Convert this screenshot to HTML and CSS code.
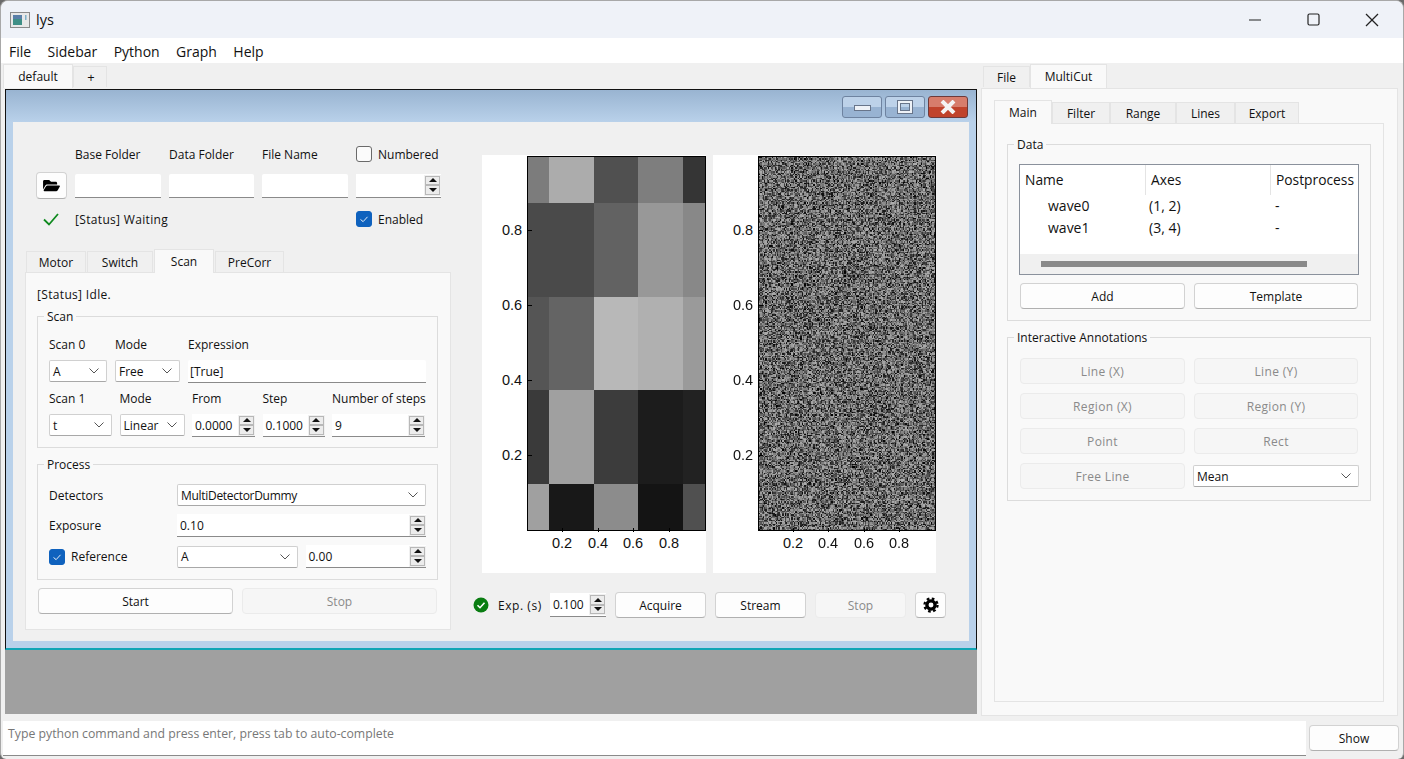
FILE: index.html
```html
<!DOCTYPE html>
<html lang="en">
<head>
  <meta charset="UTF-8" />
  <title>lys</title>
  <link rel="stylesheet" href="styles.css">
</head>
<body>
  <div class="app">
    <header class="titlebar">
      <svg class="app-icon" viewBox="0 0 20 16">
        <rect x="0.5" y="0.5" width="19" height="15" fill="#e8e8e8" stroke="#8a8a8a" />
        <rect x="3" y="3" width="9" height="10" fill="#3f8f86" />
        <rect x="3" y="3" width="9" height="4" fill="#5a7fa8" />
        <rect x="15" y="3" width="1.5" height="5" fill="#7fb0c8" />
      </svg>
      <span class="app-name">lys</span>
      <div class="win-controls">
        <svg viewBox="0 0 14 14"><line x1="1" y1="7" x2="13" y2="7" /></svg>
        <svg viewBox="0 0 14 14"><rect x="1" y="1" width="11" height="11" rx="1.5" /></svg>
        <svg viewBox="0 0 14 14"><line x1="1" y1="1" x2="13" y2="13" /><line x1="13" y1="1" x2="1" y2="13" /></svg>
      </div>
    </header>

    <nav class="menubar">
      <span>File</span><span>Sidebar</span><span>Python</span><span>Graph</span><span>Help</span>
    </nav>

    <div class="main">
      <section class="workspace">
        <div class="tabs doc-tabs">
          <div class="tab active">default</div>
          <div class="tab">+</div>
        </div>

        <div class="desktop">
          <div class="subwindow">
            <div class="sub-title">
              <div class="aero-btn"><i class="aero-min"></i></div>
              <div class="aero-btn"><i class="aero-max"></i></div>
              <div class="aero-btn aero-close">
                <svg viewBox="0 0 18 14"><path d="M3 1 L15 13 M15 1 L3 13" /></svg>
              </div>
            </div>

            <div class="sub-content">
              <div class="left-col">
                <div class="file-form">
                  <span></span>
                  <label>Base Folder</label>
                  <label>Data Folder</label>
                  <label>File Name</label>
                  <div class="check"><i class="box"></i>Numbered</div>

                  <button class="btn icon-btn">
                    <svg viewBox="0 0 576 512"><path d="M572.694 292.093L500.27 416.248A63.997 63.997 0 0 1 444.989 448H45.025c-18.523 0-30.064-20.093-20.731-36.093l72.424-124.155A64 64 0 0 1 152 256h399.964c18.523 0 30.064 20.093 20.73 36.093zM152 224h328v-48c0-26.51-21.49-48-48-48H272l-64-64H48C21.49 64 0 85.49 0 112v278.046l69.077-118.418C86.214 242.25 117.989 224 152 224z" /></svg>
                  </button>
                  <div class="field"></div>
                  <div class="field"></div>
                  <div class="field"></div>
                  <div class="spin"><span></span><div class="arrows"><i class="up"></i><i class="down"></i></div></div>

                  <svg class="ok-mark" viewBox="0 0 16 16"><path d="M1 8.5 L6 13.5 L15 3" /></svg>
                  <div class="status-wide">[Status] Waiting</div>
                  <div class="check"><i class="box on"><svg viewBox="0 0 16 16"><path d="M4 8.5 L7 11 L12 5.5" /></svg></i>Enabled</div>
                </div>

                <div class="tabs scan-tabs">
                  <div class="tab">Motor</div>
                  <div class="tab">Switch</div>
                  <div class="tab active">Scan</div>
                  <div class="tab">PreCorr</div>
                </div>
                <div class="pane scan-pane">
                  <div class="pane-status">[Status] Idle.</div>

                  <div class="group scan-group">
                    <div class="group-title">Scan</div>
                    <div class="scan-row first">
                      <div class="cell"><label>Scan 0</label><div class="combo">A<svg viewBox="0 0 10 6"><path d="M0.5 0.5 L5 5 L9.5 0.5" /></svg></div></div>
                      <div class="cell"><label>Mode</label><div class="combo">Free<svg viewBox="0 0 10 6"><path d="M0.5 0.5 L5 5 L9.5 0.5" /></svg></div></div>
                      <div class="cell"><label>Expression</label><div class="field">[True]</div></div>
                    </div>
                    <div class="scan-row second">
                      <div class="cell"><label>Scan 1</label><div class="combo">t<svg viewBox="0 0 10 6"><path d="M0.5 0.5 L5 5 L9.5 0.5" /></svg></div></div>
                      <div class="cell"><label>Mode</label><div class="combo">Linear<svg viewBox="0 0 10 6"><path d="M0.5 0.5 L5 5 L9.5 0.5" /></svg></div></div>
                      <div class="cell"><label>From</label><div class="spin"><span>0.0000</span><div class="arrows"><i class="up"></i><i class="down"></i></div></div></div>
                      <div class="cell"><label>Step</label><div class="spin"><span>0.1000</span><div class="arrows"><i class="up"></i><i class="down"></i></div></div></div>
                      <div class="cell"><label>Number of steps</label><div class="spin"><span>9</span><div class="arrows"><i class="up"></i><i class="down"></i></div></div></div>
                    </div>
                  </div>

                  <div class="group process-group">
                    <div class="group-title">Process</div>
                    <div class="process-grid">
                      <label>Detectors</label>
                      <div class="combo detector">MultiDetectorDummy<svg viewBox="0 0 10 6"><path d="M0.5 0.5 L5 5 L9.5 0.5" /></svg></div>
                      <label>Exposure</label>
                      <div class="spin"><span>0.10</span><div class="arrows"><i class="up"></i><i class="down"></i></div></div>
                      <div class="check"><i class="box on"><svg viewBox="0 0 16 16"><path d="M4 8.5 L7 11 L12 5.5" /></svg></i>Reference</div>
                      <div class="ref-pair">
                        <div class="combo">A<svg viewBox="0 0 10 6"><path d="M0.5 0.5 L5 5 L9.5 0.5" /></svg></div>
                        <div class="spin"><span>0.00</span><div class="arrows"><i class="up"></i><i class="down"></i></div></div>
                      </div>
                    </div>
                  </div>

                  <div class="start-stop">
                    <button class="btn">Start</button>
                    <button class="btn off">Stop</button>
                  </div>
                </div>
              </div>

              <div class="right-col">
                <div class="plots">
                  <div class="plot" id="plot-a"><div class="frame"><div class="heat" id="heat"></div></div></div>
                  <div class="plot plot-b" id="plot-b"><div class="frame"><canvas id="noise" width="136" height="287"></canvas></div></div>
                </div>
                <div class="acquire-row">
                  <svg class="ok-dot" viewBox="0 0 16 16"><circle cx="8" cy="8" r="7.5" /><path d="M4.5 8.2 L7 10.7 L11.5 5.8" /></svg>
                  <span class="exp-label">Exp. (s)</span>
                  <div class="spin exp-spin"><span>0.100</span><div class="arrows"><i class="up"></i><i class="down"></i></div></div>
                  <button class="btn">Acquire</button>
                  <button class="btn">Stream</button>
                  <button class="btn off">Stop</button>
                  <button class="btn gear-btn">
                    <svg viewBox="0 0 24 24"><circle class="teeth" cx="12" cy="12" r="9.8" /><circle class="ring" cx="12" cy="12" r="6.2" /></svg>
                  </button>
                </div>
              </div>
            </div>
          </div>
        </div>
      </section>

      <aside class="sidebar">
        <div class="tabs side-tabs">
          <div class="tab">File</div>
          <div class="tab active">MultiCut</div>
        </div>
        <div class="pane side-pane">
          <div class="tabs cut-tabs">
            <div class="tab active">Main</div>
            <div class="tab">Filter</div>
            <div class="tab">Range</div>
            <div class="tab">Lines</div>
            <div class="tab">Export</div>
          </div>
          <div class="pane cut-pane">
            <div class="group data-group">
              <div class="group-title">Data</div>
              <div class="tree">
                <div class="tree-head"><span>Name</span><span>Axes</span><span>Postprocess</span></div>
                <div class="tree-row"><span>wave0</span><span>(1, 2)</span><span>-</span></div>
                <div class="tree-row"><span>wave1</span><span>(3, 4)</span><span>-</span></div>
                <div class="tree-scroll"><i></i></div>
              </div>
              <div class="two-btns">
                <button class="btn">Add</button>
                <button class="btn">Template</button>
              </div>
            </div>
            <div class="group annot-group">
              <div class="group-title">Interactive Annotations</div>
              <div class="two-btns">
                <button class="btn off">Line (X)</button>
                <button class="btn off">Line (Y)</button>
                <button class="btn off">Region (X)</button>
                <button class="btn off">Region (Y)</button>
                <button class="btn off">Point</button>
                <button class="btn off">Rect</button>
                <button class="btn off">Free Line</button>
                <div class="combo">Mean<svg viewBox="0 0 10 6"><path d="M0.5 0.5 L5 5 L9.5 0.5" /></svg></div>
              </div>
            </div>
          </div>
        </div>
      </aside>
    </div>

    <footer class="cmdbar">
      <div class="cmd-input">Type python command and press enter, press tab to auto-complete</div>
      <button class="btn show-btn">Show</button>
    </footer>
  </div>
  <script src="script.js"></script>
</body>
</html>
```

FILE: styles.css
```css
* {
  margin: 0;
  padding: 0;
  box-sizing: border-box;
}
body {
  background: #6a6a6a;
  width: 1404px;
  height: 759px;
  overflow: hidden;
  font-family: "Open Sans", "Noto Sans", sans-serif;
  font-size: 12px;
  color: #111;
}
.app {
  width: 1404px;
  height: 759px;
  display: flex;
  flex-direction: column;
  background: #f0f0f0;
  border: 1px solid #a8a8a8;
  border-bottom: 0;
  border-radius: 8px 8px 6px 6px;
  overflow: hidden;
}
label {
  white-space: nowrap;
}

/* title and menu */
.titlebar {
  height: 37px;
  flex: none;
  display: flex;
  align-items: center;
  background: #eff2f8;
  padding-left: 9px;
}
.app-icon {
  width: 20px;
  height: 16px;
}
.app-name {
  margin-left: 6px;
  font-size: 14.5px;
}
.win-controls {
  margin-left: auto;
  display: flex;
  align-items: center;
}
.win-controls svg {
  width: 14px;
  height: 14px;
  margin-right: 44.5px;
  fill: none;
  stroke: #222;
  stroke-width: 1.2;
}
.win-controls svg:last-child {
  margin-right: 24px;
}
.menubar {
  height: 25px;
  flex: none;
  background: #fff;
  display: flex;
  align-items: center;
  gap: 16.4px;
  padding: 2px 0 0 8px;
  font-size: 14px;
}

.main {
  flex: 1;
  display: flex;
  min-height: 0;
}
.workspace {
  width: 980px;
  flex: none;
}

/* tabs */
.tabs {
  display: flex;
  align-items: flex-end;
}
.tab {
  height: 21px;
  background: #f0f0f0;
  border: 1px solid #e4e4e4;
  border-bottom: 0;
  margin-right: 1px;
  display: flex;
  align-items: center;
  justify-content: center;
  white-space: nowrap;
}
.tab.active {
  height: 24px;
  background: #f9f9f9;
  margin-bottom: -1px;
  position: relative;
  z-index: 1;
}
.doc-tabs {
  height: 24px;
  padding-left: 2px;
}
.doc-tabs .tab:nth-child(1) { width: 70px; margin-right: 0; }
.doc-tabs .tab:nth-child(2) { width: 34px; font-size: 13px; padding-left: 2px; }
.scan-tabs .tab:nth-child(1) { width: 60px; }
.scan-tabs .tab:nth-child(2) { width: 66px; }
.scan-tabs .tab:nth-child(3) { width: 60px; }
.scan-tabs .tab:nth-child(4) { width: 69px; }
.side-tabs .tab:nth-child(1) { width: 47px; margin-right: 0; }
.side-tabs .tab:nth-child(2) { width: 77px; }
.cut-tabs .tab:nth-child(1) { width: 58px; margin-right: 0; }
.cut-tabs .tab:nth-child(2) { width: 58px; margin-right: 0; }
.cut-tabs .tab:nth-child(3) { width: 66px; margin-right: 0; }
.cut-tabs .tab:nth-child(4) { width: 59px; margin-right: 0; }
.cut-tabs .tab:nth-child(5) { width: 64px; }
.pane {
  background: #f9f9f9;
  border: 1px solid #e4e4e4;
}

/* inner window */
.desktop {
  margin: 2px 0 0 4px;
  width: 972px;
  height: 625px;
  background: #a0a0a0;
}
.subwindow {
  height: 561px;
  display: flex;
  flex-direction: column;
  border: 1px solid #111;
  border-bottom: 2px solid #12a5b5;
  background: #b9d1ea;
}
.sub-title {
  height: 32px;
  flex: none;
  display: flex;
  justify-content: flex-end;
  gap: 3px;
  padding: 6px 8px 0 0;
  background: linear-gradient(#99b4d1, #b9d1ea);
}
.aero-btn {
  width: 40px;
  height: 22px;
  border: 1px solid #6e83a0;
  border-radius: 3px;
  background: linear-gradient(#bdd2e9 50%, #98b3d2 50%);
  display: flex;
  align-items: center;
  justify-content: center;
}
.aero-min {
  width: 17px;
  height: 6px;
  background: #eef2f7;
  border: 1px solid #68758a;
  margin-top: 2px;
}
.aero-max {
  width: 16px;
  height: 14px;
  background: transparent;
  border: 1px solid #68758a;
  box-shadow: inset 0 0 0 2px #eef2f7, inset 0 0 0 3px #68758a;
}
.aero-close {
  background: linear-gradient(#d77d6c 50%, #c0432c 50%);
  border-color: #6e3a3a;
}
.aero-close svg {
  width: 18px;
  height: 14px;
  fill: none;
  stroke: #f4f4f4;
  stroke-width: 4;
}
.sub-content {
  flex: 1;
  display: flex;
  margin: 0 7px 7px 7px;
  background: #f0f0f0;
  padding-left: 12px;
}

/* left column of the inner window */
.left-col {
  width: 426px;
  flex: none;
}
.file-form {
  margin: 23px 0 0 11px;
  display: grid;
  grid-template-columns: 31px 86px 85px 86px 85px;
  grid-template-rows: 18px 27px 22px;
  column-gap: 8px;
  row-gap: 9px;
  align-items: center;
  height: 103px;
}
.file-form .field,
.file-form .spin {
  height: 24px;
}
.status-wide {
  grid-column: 2 / 5;
  letter-spacing: 0.33px;
}
.ok-mark {
  width: 16px;
  height: 16px;
  margin-left: 7px;
  fill: none;
  stroke: #0f8a1f;
  stroke-width: 1.8;
}
.check {
  display: flex;
  align-items: center;
  gap: 6px;
  white-space: nowrap;
}
.box {
  width: 16px;
  height: 16px;
  flex: none;
  border: 1px solid #6a6a6a;
  border-radius: 3px;
  background: #fbfbfb;
  display: block;
}
.box.on {
  background: #0f62be;
  border-color: #0f62be;
}
.box svg {
  width: 14px;
  height: 14px;
  display: block;
  fill: none;
  stroke: #fff;
  stroke-width: 1;
}
.scan-tabs {
  height: 24px;
  padding-left: 1px;
}

/* form widgets */
.field {
  height: 23px;
  background: #fff;
  border-bottom: 1px solid #8a8a8a;
  border-radius: 2px 2px 0 0;
  padding: 0 2px;
  display: flex;
  align-items: center;
  white-space: nowrap;
}
.combo {
  height: 22px;
  background: #fff;
  border: 1px solid #d0d0d0;
  border-bottom-color: #a8a8a8;
  border-radius: 2px;
  padding: 0 3px;
  display: flex;
  align-items: center;
  justify-content: space-between;
  white-space: nowrap;
}
.combo svg {
  width: 10px;
  height: 6px;
  margin-right: 4px;
  fill: none;
  stroke: #555;
  stroke-width: 1;
}
.detector {
  letter-spacing: -0.3px;
}
.spin {
  height: 23px;
  background: #fff;
  border-bottom: 1px solid #8a8a8a;
  display: flex;
  align-items: center;
  justify-content: space-between;
  padding-left: 3px;
  white-space: nowrap;
}
.arrows {
  width: 17px;
  height: 21px;
  flex: none;
  background: #f0f0f0;
  padding: 1px;
  display: flex;
  flex-direction: column;
}
.arrows i {
  flex: 1;
  border: 1px solid #b8b8b8;
  background: #ececec;
  display: flex;
  align-items: center;
  justify-content: center;
}
.arrows i::after {
  content: "";
  border-left: 4px solid transparent;
  border-right: 4px solid transparent;
}
.arrows .up::after {
  border-bottom: 4px solid #111;
}
.arrows .down::after {
  border-top: 4px solid #111;
}
.btn {
  height: 26px;
  background: #fdfdfd;
  border: 1px solid #d2d2d2;
  border-bottom-color: #b0b0b0;
  border-radius: 4px;
  font: inherit;
  color: #111;
}
.btn.off {
  background: #f6f6f6;
  border-color: #ebebeb;
  color: #8a8a8a;
}
.icon-btn {
  height: 27px;
  display: flex;
  align-items: center;
  justify-content: center;
}
.icon-btn svg {
  width: 17px;
  height: 15px;
  fill: #000;
}

/* scan pane */
.scan-pane {
  height: 358px;
  padding: 12px 12px 0 11px;
}
.pane-status {
  height: 18px;
  line-height: 18px;
  margin-top: 1px;
  letter-spacing: 0.33px;
}
.group {
  position: relative;
  background: #f9f9f9;
  border: 1px solid #dcdcdc;
}
.group-title {
  position: absolute;
  top: -9px;
  left: 6px;
  height: 18px;
  line-height: 18px;
  padding: 0 3px;
  background: #f9f9f9;
  white-space: nowrap;
}
.scan-group {
  margin-top: 12px;
  height: 132px;
  padding: 19px 11px 0 11px;
}
.scan-row {
  display: grid;
}
.scan-row.first {
  grid-template-columns: 58px 65px 238px;
  column-gap: 8px;
}
.scan-row.second {
  margin-top: 7px;
  grid-template-columns: 63px 65px 63px 62px 93px;
  column-gap: 7.5px;
}
.cell label {
  display: block;
  height: 18px;
  line-height: 18px;
  margin-bottom: 6px;
}
.process-group {
  margin-top: 16px;
  height: 116px;
  padding: 19px 11px 0 11px;
}
.process-grid {
  display: grid;
  grid-template-columns: 128px 249px;
  row-gap: 8px;
  align-items: center;
}
.ref-pair {
  display: grid;
  grid-template-columns: 120.5px 120.5px;
  column-gap: 8px;
  align-items: center;
}
.start-stop {
  margin: 8px 0 0 1px;
  display: grid;
  grid-template-columns: 195px 195px;
  column-gap: 9px;
}

/* plots */
.right-col {
  margin: 33px 0 0 31px;
  width: 470px;
}
.plots {
  display: flex;
  gap: 7px;
  height: 418px;
}
.plot {
  position: relative;
  width: 224px;
  height: 418px;
  background: #fff;
  font-family: "Liberation Sans", Arial, sans-serif;
  font-size: 14.5px;
}
.plot-b {
  width: 223px;
}
.frame {
  position: relative;
  margin: 1px 0 0 45px;
  width: 179px;
  height: 375px;
  border: 1px solid #000;
}
.plot-b .frame {
  width: 178px;
}
.heat {
  display: grid;
  grid-template-columns: 21px 45px 44px 45px 22px;
  grid-template-rows: 46px 94px 93px 94px 46px;
  height: 100%;
}
#noise {
  display: block;
  width: 176px;
  height: 373px;
  image-rendering: pixelated;
}
.tick-y,
.tick-x {
  position: absolute;
  line-height: 16px;
  height: 16px;
}
.tick-y {
  left: 20px;
  margin-top: -8px;
}
.tick-x {
  top: 380px;
  transform: translateX(-50%);
}
.mark-y,
.mark-x {
  position: absolute;
  background: #000;
}
.mark-y {
  left: 46px;
  width: 4px;
  height: 1px;
}
.mark-x {
  top: 373px;
  width: 1px;
  height: 4px;
}

/* acquire row */
.acquire-row {
  margin: 19px 0 0 -9px;
  display: flex;
  align-items: center;
}
.ok-dot {
  width: 16px;
  height: 16px;
  flex: none;
}
.ok-dot circle {
  fill: #0a7d12;
}
.ok-dot path {
  fill: none;
  stroke: #fff;
  stroke-width: 1.6;
}
.exp-label {
  margin-left: 9px;
  width: 52px;
  white-space: nowrap;
  letter-spacing: 0.55px;
}
.exp-spin {
  width: 56px;
  margin-right: 9px;
  height: 24px;
}
.acquire-row .btn {
  width: 91px;
  margin-right: 9px;
}
.acquire-row .gear-btn {
  width: 31px;
  height: 26px;
  margin-right: 0;
  display: flex;
  align-items: center;
  justify-content: center;
}
.gear-btn svg {
  width: 16px;
  height: 16px;
  fill: none;
  stroke: #000;
}
.gear-btn .teeth {
  stroke-width: 3.4;
  stroke-dasharray: 4 3.7;
}
.gear-btn .ring {
  stroke-width: 5;
}

/* right sidebar */
.sidebar {
  flex: 1;
  min-width: 0;
}
.side-tabs {
  height: 24px;
  padding-left: 2px;
}
.side-pane {
  width: 417px;
  height: 628px;
  margin-top: 1px;
  padding: 11px 0 0 12px;
}
.cut-tabs {
  height: 23px;
}
.cut-pane {
  width: 390px;
  height: 579px;
  padding: 20px 12px 0 12px;
}
.data-group {
  height: 177px;
  padding: 19px 11px 0 11px;
}
.tree {
  height: 111px;
  background: #fff;
  border: 1px solid #8a919c;
  position: relative;
  font-size: 13.8px;
}
.tree-head {
  display: grid;
  grid-template-columns: 125px 125px 88px;
  height: 30px;
}
.tree-head span {
  padding-left: 5px;
  line-height: 30px;
  border-left: 1px solid #e4e4e4;
  white-space: nowrap;
}
.tree-head span:first-child {
  border-left: 0;
}
.tree-row {
  display: grid;
  grid-template-columns: 125px 125px 88px;
  height: 22px;
  line-height: 22px;
  font-size: 14px;
}
.tree-row span:first-child {
  padding-left: 28px;
}
.tree-row span:nth-child(2) {
  padding-left: 4px;
}
.tree-row span:nth-child(3) {
  padding-left: 5px;
}
.tree-scroll {
  position: absolute;
  left: 0;
  right: 0;
  bottom: 0;
  height: 20px;
  background: #f0f0f0;
  display: flex;
  align-items: center;
  padding-left: 21px;
}
.tree-scroll i {
  display: block;
  width: 266px;
  height: 6px;
  background: #8a8a8a;
}
.two-btns {
  display: grid;
  grid-template-columns: 165px 164px;
  column-gap: 9px;
  row-gap: 9px;
  padding-left: 1px;
  align-items: center;
}
.data-group .two-btns {
  margin-top: 8px;
}
.annot-group {
  margin-top: 16px;
  height: 164px;
  padding: 20px 11px 0 11px;
}
.annot-group .btn {
  letter-spacing: 0.35px;
}
.annot-group .combo {
  height: 22px;
  margin-left: -1px;
  width: 166px;
}

/* command line */
.cmdbar {
  height: 43px;
  flex: none;
  display: flex;
  align-items: flex-start;
  padding: 5px 0 0 2px;
}
.cmd-input {
  width: 1303px;
  height: 35px;
  background: #fff;
  border-bottom: 1px solid #8a8a8a;
  padding: 4px 5px;
  color: #777;
  font-size: 12.28px;
}
.show-btn {
  width: 90px;
  margin: 4px 0 0 3px;
}
```

FILE: script.js
```js
// heatmap values, row by row from the top
const heatRows = [
  ['#7c7c7c', '#acacac', '#505050', '#7e7e7e', '#353535'],
  ['#4a4a4a', '#4a4a4a', '#626262', '#989898', '#888888'],
  ['#555555', '#646464', '#b8b8b8', '#b0b0b0', '#9a9a9a'],
  ['#3a3a3a', '#a0a0a0', '#3c3c3c', '#1c1c1c', '#222222'],
  ['#a0a0a0', '#181818', '#8c8c8c', '#141414', '#505050']
];

const heat = document.getElementById('heat');
heatRows.flat().forEach(color => {
  const cell = document.createElement('div');
  cell.style.background = color;
  heat.appendChild(cell);
});

// axis ticks
const yTicks = [['0.8', 75], ['0.6', 150], ['0.4', 225], ['0.2', 300]];
const xTicks = {
  'plot-a': [['0.2', 80], ['0.4', 116], ['0.6', 151], ['0.8', 187]],
  'plot-b': [['0.2', 80], ['0.4', 115], ['0.6', 151], ['0.8', 186]]
};

function addTick(plot, className, text, side, pos) {
  const el = document.createElement('div');
  el.className = className;
  el.style[side] = pos + 'px';
  if (text) el.textContent = text;
  plot.appendChild(el);
}

Object.keys(xTicks).forEach(id => {
  const plot = document.getElementById(id);
  yTicks.forEach(([text, y]) => {
    addTick(plot, 'tick-y', text, 'top', y);
    addTick(plot, 'mark-y', '', 'top', y);
  });
  xTicks[id].forEach(([text, x]) => {
    addTick(plot, 'tick-x', text, 'left', x);
    addTick(plot, 'mark-x', '', 'left', x);
  });
});

// noise image
const canvas = document.getElementById('noise');
const ctx = canvas.getContext('2d');
const img = ctx.createImageData(canvas.width, canvas.height);
let seed = 12345;
function rand() {
  seed = (seed * 1664525 + 1013904223) % 4294967296;
  return seed / 4294967296;
}
for (let i = 0; i < img.data.length; i += 4) {
  const v = Math.floor(175 * Math.pow(rand(), 0.7));
  img.data[i] = img.data[i + 1] = img.data[i + 2] = v;
  img.data[i + 3] = 255;
}
ctx.putImageData(img, 0, 0);
```
